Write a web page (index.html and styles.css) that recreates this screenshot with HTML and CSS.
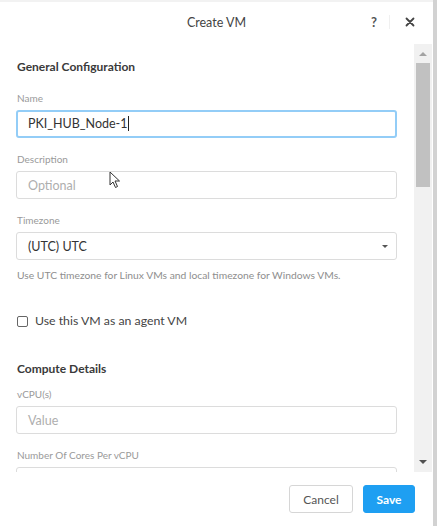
FILE: index.html
```html
<!DOCTYPE html>
<html>
<head lang="en">
    <meta charset="UTF-8">
    <title>Create VM</title>
    <link rel="stylesheet" href="styles.css">
</head>
<body>
<div class="dialog">
    <div class="head">
        <span></span>
        <span class="title">Create VM</span>
        <div class="tools">
            <span class="help">?</span>
            <span class="sep"></span>
            <svg class="close" width="10" height="10" viewBox="0 0 10 10"><path d="M1.5 1.5L8.5 8.5M8.5 1.5L1.5 8.5" stroke="#444" stroke-width="1.8" stroke-linecap="round"/></svg>
        </div>
    </div>
    <div class="main">
        <div class="content">
            <h3 class="section first">General Configuration</h3>

            <div class="field">
                <label>Name</label>
                <div class="box focus">PKI_HUB_Node-1<span class="caret"></span></div>
            </div>
            <div class="field">
                <label>Description</label>
                <div class="box empty">Optional</div>
            </div>
            <div class="field">
                <label>Timezone</label>
                <div class="box select">(UTC) UTC<span class="arrow"></span></div>
                <p class="hint">Use UTC timezone for Linux VMs and local timezone for Windows VMs.</p>
            </div>

            <div class="check"><span class="tick"></span>Use this VM as an agent VM</div>

            <h3 class="section">Compute Details</h3>
            <div class="field">
                <label>vCPU(s)</label>
                <div class="box empty">Value</div>
            </div>
            <div class="field">
                <label>Number Of Cores Per vCPU</label>
                <div class="box"></div>
            </div>

            <svg class="cursor" width="12" height="18" viewBox="0 0 12 18"><path d="M1 1L1 14L4 11L6.5 16.5L8.5 15.5L6 10L10.5 10Z" fill="#fff" stroke="#333" stroke-width="1"/></svg>
        </div>
        <div class="scroll">
            <span class="up"></span>
            <div class="thumb"></div>
            <span class="down"></span>
        </div>
    </div>
    <div class="foot">
        <button class="btn cancel">Cancel</button>
        <button class="btn save">Save</button>
    </div>
</div>
</body>
</html>
```
FILE: styles.css
```css
*{
    margin:0;
    padding:0;
    box-sizing:border-box;
}
body{
    background:#d2d2d2;
    font-family:Lato, "Open Sans", sans-serif;
    color:#333;
    width:437px;
    height:526px;
    overflow:hidden;
}
.dialog{
    width:433px;
    height:526px;
    background:#fff;
    display:flex;
    flex-direction:column;
    border-top:2px solid #f2f2f2;
}
.head{
    height:40px;
    flex:none;
    display:grid;
    grid-template-columns:1fr auto 1fr;
    align-items:center;
}
.title{
    font-size:12.5px;
    color:#444;
}
.tools{
    display:flex;
    align-items:center;
    justify-content:flex-end;
    padding-right:18px;
}
.help{
    font-size:13px;
    font-weight:bold;
    color:#555;
    margin-right:12px;
}
.sep{
    width:1px;
    height:14px;
    background:#f0f0f0;
    margin-right:15px;
}
.main{
    flex:1;
    display:flex;
    overflow:hidden;
}
.content{
    width:414px;
    flex:none;
    padding:18px 17px 0 16px;
    position:relative;
    overflow:hidden;
}
.section{
    font-size:12px;
    font-weight:bold;
    color:#3a3a3a;
    line-height:14px;
    margin-top:33px;
    margin-bottom:11px;
    padding-left:1px;
}
.section.first{
    margin-top:0;
    margin-bottom:17px;
}
.field{
    margin-bottom:14px;
}
.field label{
    display:block;
    font-size:10px;
    line-height:14px;
    color:#9a9a9a;
    margin-bottom:5px;
    padding-left:1px;
}
.box{
    height:28px;
    border:1px solid #dcdcdc;
    border-radius:3px;
    padding:0 11px;
    font-size:12.5px;
    line-height:27px;
    color:#333;
}
.box.focus{
    border:2px solid #93cdf7;
    line-height:24px;
    padding-left:10px;
}
.caret{
    display:inline-block;
    width:1px;
    height:15px;
    background:#222;
    vertical-align:-3px;
}
.box.empty{
    color:#aeaeae;
}
.box.select{
    display:flex;
    justify-content:space-between;
    align-items:center;
    padding-right:8px;
}
.arrow{
    width:0;
    height:0;
    border-left:3px solid transparent;
    border-right:3px solid transparent;
    border-top:3px solid #555;
}
.hint{
    font-size:10.3px;
    line-height:12px;
    color:#8e8e8e;
    margin-top:9px;
    padding-left:1px;
}
.check{
    display:flex;
    align-items:center;
    gap:7px;
    font-size:12.3px;
    line-height:16px;
    color:#444;
    margin-top:32px;
    padding-left:1px;
}
.tick{
    width:11px;
    height:11px;
    border:1px solid #666;
    border-radius:2px;
}
.cursor{
    position:absolute;
    left:109px;
    top:129px;
}
.scroll{
    width:18px;
    flex:none;
    background:#f1f1f1;
    display:flex;
    flex-direction:column;
    align-items:center;
    padding:2px 0;
    margin-top:2px;
}
.thumb{
    width:14px;
    height:124px;
    background:#c1c1c1;
    margin-top:7px;
}
.up,.down{
    width:0;
    height:0;
    border-left:4px solid transparent;
    border-right:4px solid transparent;
    margin-top:6px;
}
.up{
    border-bottom:4px solid #a3a3a3;
}
.down{
    border-top:4px solid #505050;
    margin-top:auto;
    margin-bottom:6px;
}
.foot{
    height:54px;
    flex:none;
    display:flex;
    justify-content:flex-end;
    align-items:flex-start;
    gap:10px;
    padding:13px 18px 0 0;
}
.btn{
    height:28px;
    border-radius:3px;
    font-family:Lato, "Open Sans", sans-serif;
    font-size:12px;
}
.cancel{
    width:64px;
    background:#fff;
    border:1px solid #d6d6d6;
    color:#555;
}
.save{
    width:52px;
    background:#1e9ff2;
    border:1px solid #1e9ff2;
    color:#fff;
    font-weight:bold;
}
```
